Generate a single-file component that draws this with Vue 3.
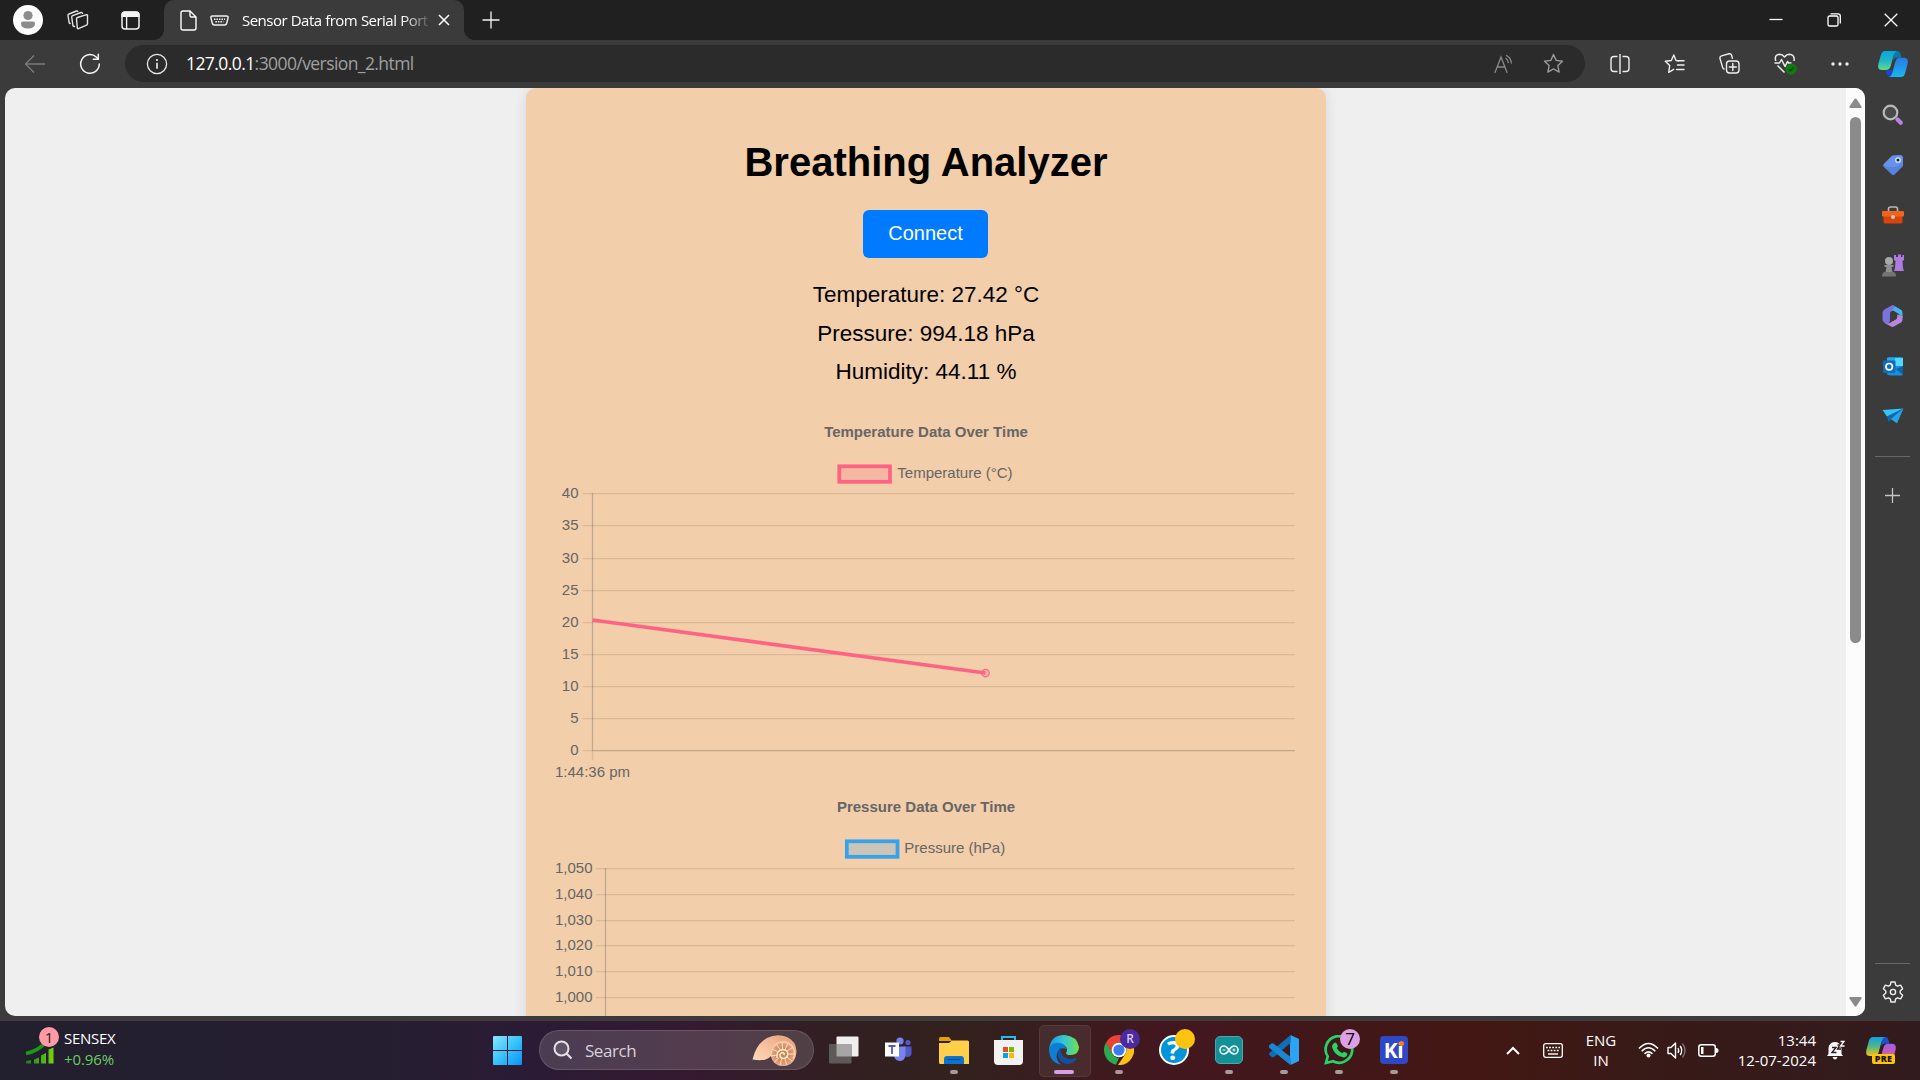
<script setup>
const tempTicks = [81, 113, 146, 178, 210, 242, 274, 306, 338].map((y, i) => ({ label: String(40 - i * 5), y }))
const pressTicks = [81, 107, 133, 158, 184, 210].map((y, i) => ({ label: (1050 - i * 10).toLocaleString('en-US'), y }))
</script>

<template>
  <div class="screen">
    <header class="tabstrip">
      <div class="slot avatar">
        <svg width="30" height="30" viewBox="0 0 30 30"><circle cx="15" cy="15" r="15" fill="#fff" /><circle cx="15" cy="10.5" r="4.6" fill="#8c8c8c" /><path d="M8 18.5q0-2 2-2h10q2 0 2 2 0 5-7 5t-7-5z" fill="#8c8c8c" /></svg>
      </div>
      <div class="slot spaces">
        <svg width="22" height="20" viewBox="0 0 22 20" fill="none" stroke="#e4e4e4" stroke-width="1.4" stroke-linejoin="round" stroke-linecap="round"><path d="M10.5 7.5l9-2.8q1-.2 1 .8v8.3q0 1-1 1.4l-8 3.5q-1 .4-1.200-.8l-.8-9q0-1 1-1.400z" /><path d="M7.500 16.500L6 16l-1.300-9q0-1 1-1.400L14 2.500q1.200-.3 1.500.9" /><path d="M3.200 13.500l-1-.5L1 5.500Q.9 4.400 2 4l7.500-3q1-.2 1.300.5" /></svg>
      </div>
      <div class="slot actions">
        <svg width="19" height="19" viewBox="0 0 19 19"><rect x="1" y="1" width="17" height="17" rx="3" fill="none" stroke="#f4f4f4" stroke-width="1.500" /><path d="M.5 6V4q0-3.500 3.500-3.500h11q3.500 0 3.500 3.500v2z" fill="#f4f4f4" /><path d="M5.600 6v12" stroke="#f4f4f4" stroke-width="1.400" /></svg>
      </div>
      <div class="tab">
        <svg class="file" width="17" height="21" viewBox="0 0 17 21" fill="none" stroke="#fff" stroke-width="1.400" stroke-linejoin="round"><path d="M3 1h7l6 6v11q0 2-2 2H3q-2 0-2-2V3q0-2 2-2z" /><path d="M10 1v4.500q0 1.500 1.500 1.500H16" /></svg>
        <svg class="serial" width="19" height="11" viewBox="0 0 19 11"><path d="M2.500 1h14Q18.500 1 18 3l-1.200 5q-.4 2-2.300 2H4.500q-1.900 0-2.300-2L1 3Q.5 1 2.500 1z" fill="none" stroke="#f0f0f0" stroke-width="1.400" /><path d="M4 4.200h11M5.400 6.800h8" stroke="#f0f0f0" stroke-width="1.500" stroke-dasharray="1.500 1" /></svg>
        <span class="tabtitle">Sensor Data from Serial Port</span>
        <svg width="12" height="12" viewBox="0 0 12 12"><path d="M1 1l10 10M11 1L1 11" stroke="#fff" stroke-width="1.500" /></svg>
      </div>
      <div class="slot newtab"><svg width="18" height="18" viewBox="0 0 18 18"><path d="M9 .5v17M.5 9h17" stroke="#f4f4f4" stroke-width="1.300" /></svg></div>
      <div class="winbtns">
        <div class="slot"><svg width="14" height="14"><path d="M.5 6.500h13" stroke="#fff" stroke-width="1.300" /></svg></div>
        <div class="slot"><svg width="14" height="14" viewBox="0 0 14 14" fill="none" stroke="#fff" stroke-width="1.300"><rect x="1" y="3" width="10" height="10" rx="1.500" /><path d="M3.500.8H11q2.300 0 2.300 2.200v7.500" /></svg></div>
        <div class="slot"><svg width="14" height="14"><path d="M.7.7l12.600 12.600M13.300.7L.7 13.300" stroke="#fff" stroke-width="1.300" /></svg></div>
      </div>
    </header>

    <nav class="toolbar">
      <div class="slot back"><svg width="22" height="20" viewBox="0 0 22 20" fill="none" stroke="#7a7a7a" stroke-width="1.400"><path d="M21 10H1.500M10 1.500L1.500 10l8.500 8.500" /></svg></div>
      <div class="slot reload"><svg width="22" height="22" viewBox="0 0 22 22" fill="none" stroke="#f4f4f4" stroke-width="1.500" stroke-linecap="round"><path d="M20.300 11a9.300 9.300 0 1 1-3.100-7L19 5.800" /><path d="M19.300 1.200v5h-5" /></svg></div>
      <div class="address">
        <svg class="info" width="22" height="22" viewBox="0 0 22 22"><circle cx="11" cy="11" r="9.600" fill="none" stroke="#e8e8e8" stroke-width="1.300" /><circle cx="11" cy="7" r="1" fill="#fff" /><path d="M11 9.800v6" stroke="#fff" stroke-width="1.500" /></svg>
        <div class="url"><b>127.0.0.1</b>:3000/version_2.html</div>
        <svg class="read" width="20" height="20" viewBox="0 0 20 20" fill="none" stroke="#8a8a8a" stroke-width="1.300" stroke-linecap="round"><path d="M1 18.500L7 3l6 15.500M3 13h8" /><path d="M12 4.500q2 1.500 2.200 4M12.500 1.500q4.500 2.500 4.800 7.500" /></svg>
        <svg width="21" height="21" viewBox="0 0 21 21" fill="none" stroke="#9a9a9a" stroke-width="1.400" stroke-linejoin="round"><path d="M10.500 1.500l2.700 5.900 6.300.8-4.600 4.400 1.200 6.500-5.600-3.200-5.600 3.200 1.200-6.500L1.500 8.200l6.300-.8z" /></svg>
      </div>
      <div class="slot tool"><svg width="20" height="20" viewBox="0 0 20 20" fill="none" stroke="#eee" stroke-width="1.400"><path d="M7.500 2.500H4q-3 0-3 3v9q0 3 3 3h3.500M12.500 2.500H16q3 0 3 3v9q0 3-3 3h-3.500M10 0v20" /></svg></div>
      <div class="slot tool"><svg width="21" height="20" viewBox="0 0 21 20" fill="none" stroke="#eee" stroke-width="1.400" stroke-linejoin="round" stroke-linecap="round"><path d="M14.500 6.800L12 6.600 9.800 1 7.300 6.500l-6 .8 4.400 4.200-1 6.800 5-3" /><path d="M14 6.800h6M13.500 11h6.500M12.500 15.500H20" /></svg></div>
      <div class="slot tool"><svg width="21" height="21" viewBox="0 0 21 21" fill="none" stroke="#eee" stroke-width="1.400" stroke-linecap="round"><rect x="7.500" y="8" width="12.500" height="12" rx="3" /><path d="M13.800 10.500v7M10.300 14h7M5 16q-1-.2-1.300-1.400L1 5.600Q.6 3.500 2.500 2.800l7.500-2q2-.4 2.600 1.400l.8 3" /></svg></div>
      <div class="slot tool"><svg width="23" height="22" viewBox="0 0 23 22" fill="none" stroke="#eee" stroke-width="1.500" stroke-linejoin="round"><path d="M1.800 8Q0 1.500 5.500 1.200q3 0 5 2.800 2-2.800 5-2.800 5.500.3 4.500 6.800M3.500 12.500l7 7M.5 10h5l2-3.500 3.500 7 2.500-5 1 1.500h3" /><circle cx="17.300" cy="16" r="5.600" fill="#0f7b0f" stroke="none" /><path d="M14.800 16.200l1.800 1.600 3.200-3.500" stroke="#063e06" stroke-width="1.300" /></svg></div>
      <div class="slot tool"><svg width="18" height="4"><circle cx="2" cy="2" r="1.700" fill="#eee" /><circle cx="9" cy="2" r="1.700" fill="#eee" /><circle cx="16" cy="2" r="1.700" fill="#eee" /></svg></div>
      <div class="slot copilot">
        <svg width="30" height="26" viewBox="0 0 30 26"><defs><linearGradient id="cpa" x1="0" y1="0" x2="0" y2="1"><stop offset="0" stop-color="#0aa5dd" /><stop offset=".5" stop-color="#20b5c8" /><stop offset="1" stop-color="#5fdc8a" /></linearGradient><linearGradient id="cpb" x1="0" y1="0" x2="0" y2="1"><stop offset="0" stop-color="#2b78e0" /><stop offset="1" stop-color="#19b7f2" /></linearGradient></defs><path d="M16 0h3.500q2.200 0 3 3l1 3.800H19q-3 0-4 3z" fill="#0a78a8" /><path d="M8 19h7l-1.300 5q-.6 2-2.200 2-2 0-2.700-3z" fill="#1b45d0" /><path d="M7 0h12q-2.500 1-3.300 4l-3 11q-1 4-5 4H4Q-1 19 .5 12.500L3 3.500Q4 0 7 0z" fill="url(#cpa)" /><path d="M23 26H11q2.500-1 3.300-4l3-11q1-4.200 5-4.200H26q5 0 3.500 6.500L27 22.500Q26 26 23 26z" fill="url(#cpb)" /></svg>
      </div>
    </nav>

    <div class="body">
      <main class="viewport">
        <div class="page">
          <section class="card">
            <h1>Breathing Analyzer</h1>
            <button type="button">Connect</button>
            <p class="r1">Temperature: 27.42 °C</p>
            <p>Pressure: 994.18 hPa</p>
            <p>Humidity: 44.11 %</p>
            <svg class="chart first" width="750" height="375" viewBox="0 0 750 375">
              <text class="title" x="375" y="25" text-anchor="middle">Temperature Data Over Time</text>
              <rect x="288.300" y="54.300" width="50.700" height="15.500" fill="rgba(255,99,132,.2)" stroke="#ff6384" stroke-width="3.750" />
              <text x="346.300" y="66">Temperature (°C)</text>
              <g v-for="t in tempTicks" :key="t.label">
                <path :d="`M31.500 ${t.y}.500H744`" class="grid" />
                <text x="27.500" :y="t.y + 5" text-anchor="end">{{ t.label }}</text>
              </g>
              <path d="M41.500 338.500H744" class="grid" />
              <path d="M41.500 81V338" class="zero" />
              <path d="M41.500 338V348" class="grid" />
              <text x="41.500" y="364.500" text-anchor="middle">1:44:36 pm</text>
              <path d="M41.500 208l393 53" stroke="#ff6384" stroke-width="3.750" />
              <circle cx="434.500" cy="261" r="3.750" fill="rgba(255,99,132,.2)" stroke="#ff6384" stroke-width="1.250" />
            </svg>
            <svg class="chart" width="750" height="222" viewBox="0 0 750 222">
              <text class="title" x="375" y="25" text-anchor="middle">Pressure Data Over Time</text>
              <rect x="295.800" y="54.300" width="50.700" height="15.500" fill="rgba(54,162,235,.2)" stroke="#36a2eb" stroke-width="3.750" />
              <text x="353.300" y="66">Pressure (hPa)</text>
              <g v-for="t in pressTicks" :key="t.label">
                <path :d="`M45 ${t.y}.500H744`" class="grid" />
                <text x="41.500" :y="t.y + 4.700" text-anchor="end">{{ t.label }}</text>
              </g>
              <path d="M54.500 81V240" class="zero" />
            </svg>
          </section>
        </div>
        <div class="scroll">
          <svg width="13" height="11" viewBox="0 0 13 11"><path d="M5.500 1q1-1.200 2 0l5 7.500q.8 1.500-1 1.500h-10Q-.3 10 .5 8.500z" fill="#8b8b8b" /></svg>
          <div class="thumb"></div>
          <svg class="down" width="13" height="11" viewBox="0 0 13 11"><path d="M5.500 10q1 1.200 2 0l5-7.500Q13.300 1 11.500 1h-10Q-.3 1 .5 2.500z" fill="#8b8b8b" /></svg>
        </div>
      </main>
      <aside class="sidebar">
        <div class="side"><svg width="22" height="22" viewBox="0 0 22 22"><circle cx="8.500" cy="8.500" r="6.800" fill="#4a4a4a" stroke="#b9b9b9" stroke-width="2.200" /><path d="M15.500 15.500l3.300 3.300" stroke="#b982e8" stroke-width="4.200" stroke-linecap="round" /></svg></div>
        <div class="side"><svg width="22" height="22" viewBox="0 0 22 22"><path d="M11 1.500L18 1q3 0 3 3v7q0 1-.8 1.800l-7.500 7.500q-1.500 1.400-3 0l-8-7.500q-1.200-1.400 0-2.700l7.500-7.600Q10 1.600 11 1.500z" fill="#6692e8" /><path d="M1.300 12q.2.500.8 1.100l7.600 7.200q1.500 1.400 3 0l7.500-7.500L21 8q-7 8-19.700 4z" fill="#4d7bd6" opacity=".6" /><circle cx="16" cy="6" r="2.200" fill="#222" stroke="#dce8ff" stroke-width="1.300" /></svg></div>
        <div class="side"><svg width="22" height="18" viewBox="0 0 22 18"><path d="M6.500 6V3q0-2 2-2h5q2 0 2 2v3" fill="none" stroke="#b8b8b8" stroke-width="1.600" /><rect x="1.500" y="9" width="19" height="8.500" rx="1.500" fill="#d8450b" /><rect x="0" y="5" width="22" height="5.500" rx="1" fill="#f0641e" /><circle cx="11" cy="11" r="2" fill="#c9c9c9" /></svg></div>
        <div class="side"><svg width="22" height="23" viewBox="0 0 22 23"><path d="M12 1h2v2h2V.500h3V3h1.500V1H22v5l-1.500 1 .5 7 1 3H12l1-3 .5-7L12 6z" fill="#ae7be0" /><circle cx="7" cy="7" r="4" fill="#a8a8a8" /><path d="M2.500 11h9v2h-2l1 5h-7l1-5h-2z" fill="#8f8f8f" /><path d="M0 22.500q0-4.500 3-4.500h8q3 0 3 4.500z" fill="#747474" /></svg></div>
        <div class="side"><svg width="21" height="22" viewBox="0 0 21 22"><path d="M10 .3L2 4.800Q.5 6 .5 8v6.500q0 2 2 3.200L5 19q3-1 3-4V8.500q0-1.500 1.300-2.300L15 3 12 .7Q11-.2 10 .3z" fill="#7b72dc" /><path d="M12 .7l7 4q1.500 1 1.500 3v6q-.5-3-4-5L12 6q-1.800-1-3 .3Q10 4 13 2.500z" fill="#45b5ee" /><path d="M20.500 11v3.500q0 2-1.500 3l-7 4q-1.500.8-3 0L2.500 18q4 1 6-.6l5.500-3.200q2-1.300 1-4.700 5 1 5.500 1.500z" fill="#b787dd" /><path d="M10.500 7.500l4.300 2.300v4L10.500 16 8 14.300V9z" fill="#3b3b3b" /></svg></div>
        <div class="side"><svg width="20" height="19" viewBox="0 0 20 19"><rect x="4" width="16" height="18" rx="1.500" fill="#1591df" /><path d="M4 1h16v8H4z" fill="#50d9ff" /><path d="M4 1h8v8H4z" fill="#28a8ea" /><path d="M20 9v8q0 1.500-1.500 1.500H6L20 9z" fill="#1490df" /><path d="M20 18L13 12l7-3z" fill="#0e63a8" /><rect y="3.500" width="12.500" height="12.500" rx="1.200" fill="#0f6cbd" /><circle cx="6.200" cy="9.700" r="3.200" fill="none" stroke="#fff" stroke-width="1.700" /></svg></div>
        <div class="side"><svg width="22" height="16" viewBox="0 0 22 16"><path d="M.5 2L21.500.5 5 8.500z" fill="#36c3f5" /><path d="M5 8.500L21.500.5 15 15.300z" fill="#27a5e8" /><path d="M5 8.500L21.500.5 9.500 10.500 6.500 14z" fill="#0b6ab3" /></svg></div>
        <div class="rule"></div>
        <svg class="plus" width="15" height="15" viewBox="0 0 15 15"><path d="M7.500 0v15M0 7.500h15" stroke="#c4c4c4" stroke-width="1.300" /></svg>
        <div class="rule low"></div>
        <svg class="gear" width="22" height="22" viewBox="0 0 22 22" fill="none" stroke="#eee" stroke-width="1.400" stroke-linejoin="round"><path d="M9 1h4l.7 3.200 1.800 1 3.100-1 2 3.500-2.400 2.200v2.200l2.400 2.200-2 3.500-3.100-1-1.800 1L13 21H9l-.7-3.200-1.800-1-3.100 1-2-3.500 2.400-2.200V9.900L1.400 7.700l2-3.500 3.100 1 1.800-1z" /><circle cx="11" cy="11" r="2.600" /></svg>
      </aside>
    </div>

    <footer class="taskbar">
      <div class="widget">
        <div class="stock">
          <svg width="30" height="38" viewBox="0 0 30 38"><defs><linearGradient id="stk"><stop offset="0" stop-color="#15801c" /><stop offset="1" stop-color="#75d310" /></linearGradient></defs><path d="M1 26.500Q13 24 20 16" fill="none" stroke="#1f9718" stroke-width="3.600" /><path d="M1 36.500v-2.500l5-1v3.500zM9 36.500v-4l5-2v6zM16 36.500v-8l5-2.500v10.500zM23.500 36.500v-14l5-2v16z" fill="url(#stk)" /></svg>
          <span class="badge">1</span>
        </div>
        <div class="quote"><span>SENSEX</span><span class="up">+0.96%</span></div>
      </div>
      <div class="apps">
        <div class="app"><svg width="29" height="29" viewBox="0 0 29 29"><defs><linearGradient id="win" x1="0" y1="0" x2="1" y2="1"><stop offset="0" stop-color="#8be4ff" /><stop offset=".5" stop-color="#39c3fa" /><stop offset="1" stop-color="#0a90fb" /></linearGradient></defs><path d="M1 0h13v14H0V1q0-1 1-1zM15 0h13q1 0 1 1v13H15zM0 15h14v14H1q-1 0-1-1zM15 15h14v13q0 1-1 1H15z" fill="url(#win)" /></svg></div>
        <div class="search">
          <svg width="20" height="20" viewBox="0 0 20 20" fill="none" stroke="#e5dfe6"><circle cx="8.500" cy="8.500" r="7" stroke-width="2" fill="rgba(255,255,255,.12)" /><path d="M13.500 13.500l5 5" stroke-width="2.200" /></svg>
          <span>Search</span>
          <svg class="shell" width="45" height="31" viewBox="0 0 45 31">
            <defs>
              <linearGradient id="sh" x1="0" y1="1" x2="1" y2="0"><stop offset="0" stop-color="#fde0bf" /><stop offset=".45" stop-color="#f9c39d" /><stop offset="1" stop-color="#e39a78" /></linearGradient>
              <radialGradient id="sp"><stop offset="0" stop-color="#b5651d" /><stop offset=".6" stop-color="#d98d66" /><stop offset="1" stop-color="#e8a888" /></radialGradient>
            </defs>
            <path d="M.5 24.500Q4 9 15 3 25-2 35 2q9 4 9.500 14-.5 14-13.500 15-10-.5-12-10-5 6-18.500 3.500z" fill="url(#sh)" />
            <circle cx="31" cy="19" r="12" fill="url(#sp)" />
            <path d="M31 19l-11-5M31 19l-7-10.500M31 19l-1-12M31 19l5-11M31 19l10-7M31 19l12 0M31 19l9 7M31 19l4 11M31 19l-3 11M31 19l-8.500 8M31 19l-12 2" stroke="#fde3c0" stroke-width="1" />
            <path d="M19 21q0-9 7-13 8-3 14 3 5 7 1 13" fill="none" stroke="#fbd0ac" stroke-width="1.300" />
            <circle cx="31" cy="19.500" r="4.800" fill="#cf8350" />
            <path d="M25 23q-1-8 6-8.500 5 .5 4.800 5-.8 4-4.800 4-3.300-.8-3-3.800.8-2.500 3.300-2 1.500 1 .7 2.500" fill="none" stroke="#fff0d2" stroke-width="1.500" />
          </svg>
        </div>
        <div class="app"><svg width="30" height="28" viewBox="0 0 30 28"><rect x="7.500" y=".500" width="22" height="20" rx="1" fill="#efefef" /><rect y="8" width="22.500" height="19.500" rx="1" fill="#5f5a5a" /><path d="M7.500 8h15v12.500h-15z" fill="#a7a5a5" /></svg></div>
        <div class="app teams"><svg width="27" height="25" viewBox="0 0 27 25"><circle cx="15" cy="4" r="3.600" fill="#7b83eb" /><circle cx="23" cy="5.500" r="2.600" fill="#5059c9" /><path d="M19 9.500h7.500V16q0 4-4 4-3.500 0-3.500-4z" fill="#5059c9" /><path d="M9 9.500h11.500v9q-1 5.500-6 5.500-4.500-.5-5.500-5z" fill="#7b83eb" /><rect y="5.500" width="14" height="14" fill="#fff" /><path d="M3.500 9h7M7 9v8" stroke="#5059c9" stroke-width="1.800" /></svg></div>
        <div class="app"><svg width="30" height="27" viewBox="0 0 30 27"><path d="M1.500 0h8.500l3 4H0V1.500Q0 0 1.500 0z" fill="#e2a100" /><path d="M0 6h10l3-2.500h15.500q1.500 0 1.500 1.500v22H1.500Q0 27 0 25.500z" fill="#ffcf4b" /><path d="M5 27v-5q0-3 3-3h14q3 0 3 3v5z" fill="#0c73cf" /><path d="M8.500 22.500h13" stroke="#07509c" stroke-width="1.300" /></svg><i></i></div>
        <div class="app"><svg width="29" height="29" viewBox="0 0 29 29"><path d="M8 5V1h13v4" fill="none" stroke="#22bdf0" stroke-width="2" /><path d="M0 4h29v21q0 4-4 4H4q-4 0-4-4z" fill="#f2f2f2" /><path d="M9 11h5v5H9z" fill="#f04b20" /><path d="M15 11h5v5h-5z" fill="#7aba02" /><path d="M9 17h5v5H9z" fill="#01a2ee" /><path d="M15 17h5v5h-5z" fill="#fdb801" /></svg></div>
        <div class="app active"><svg width="30" height="30" viewBox="0 0 30 30"><defs><linearGradient id="ea"><stop offset="0" stop-color="#1899e0" /><stop offset=".5" stop-color="#34c7d4" /><stop offset="1" stop-color="#72e04a" /></linearGradient></defs><path d="M0 15Q1 0 15.500 0 28 1 30 12q0 7-7.500 8-5 .5-5.500-2 2-3 0-6-3-4-9-2.500Q2 11 0 15z" fill="url(#ea)" /><path d="M0 15.500Q1 8 9 7.800q7 .2 8 6.200-5-2-8 2-4 8 3 13.500Q1 28 0 15.500z" fill="#0c7fd5" /><path d="M12 12.500q-5 4-2.500 10 2.500 6 9 6.500 6-.5 9.500-5.500 0-1-1-.5-8 3-13-2-3-4-2-8.500z" fill="#11529f" /></svg><i></i></div>
        <div class="app"><svg width="30" height="30" viewBox="0 0 30 30"><path d="M2 7.500A15 15 0 0 1 28 7.500H15L8.500 19z" fill="#ea4335" /><path d="M2 7.500L8.500 18.700Q11 23 15 23l-3 6.700A15 15 0 0 1 2 7.500z" fill="#2da94f" /><path d="M28 7.500A15 15 0 0 1 14 30l7.500-11.300Q24 14 20 8.500L15 7.500z" fill="#fbc116" /><circle cx="15" cy="15" r="7.300" fill="#fff" /><circle cx="15" cy="15" r="5.600" fill="#3a7cec" /></svg><b class="mark prof">R</b><i></i></div>
        <div class="app"><div class="help">?</div><b class="mark amber"></b></div>
        <div class="app"><svg width="28" height="28" viewBox="0 0 28 28"><rect x=".5" y=".5" width="27" height="27" rx="4.500" fill="#149097" stroke="#45a9ae" /><path d="M14 14q-2.500-4-5-4a4 4 0 0 0 0 8q2.500 0 5-4 2.500-4 5-4a4 4 0 0 1 0 8q-2.500 0-5-4z" fill="none" stroke="#e8f5f4" stroke-width="1.600" /><path d="M7.500 14h3M17.500 14h3M19 12.500v3" stroke="#e8f5f4" /></svg><i></i></div>
        <div class="app"><svg width="30" height="30" viewBox="0 0 30 30"><path d="M21.500 0L30 4v22l-8.500 4-.5-8V8z" fill="#2ba5f3" /><path d="M21.500 30L3.500 12.500 1 10.500q-1.500 1-.5 2.500l21 17 .5-8z" fill="#1583cf" /><path d="M3 22l-2.500-2q-1-1 0-2L21.500 0v8L5 22q-1 .6-2 0z" fill="#0c70b8" /><path d="M.5 12.500Q-.5 11 .5 10L2.500 8.500q1-.6 2 0L21.500 22v8z" fill="#1b87d0" /></svg><i></i></div>
        <div class="app"><svg width="30" height="30" viewBox="0 0 30 30"><path d="M2 28l1.700-6.500A13.300 13.300 0 1 1 9 26.300z" fill="none" stroke="#25d366" stroke-width="2.700" /><path d="M10 8q2-1.500 3 1l.8 2q0 1-1 2 2 4 5.500 5.300l1.500-1.500q1 0 3.500 1.700.4 3-3.500 4Q10.500 21 8 12q0-2.500 2-4z" fill="#25d366" /></svg><b class="mark seven">7</b><i></i></div>
        <div class="app"><div class="kicad">Ki</div><i></i></div>
      </div>
      <div class="tray">
        <div class="t chev"><svg width="14" height="9"><path d="M1 8l6-6 6 6" fill="none" stroke="#fff" stroke-width="2" /></svg></div>
        <div class="t kb"><svg width="20" height="15" viewBox="0 0 20 15"><rect x=".7" y=".7" width="18.600" height="13.600" rx="2" fill="none" stroke="#fff" stroke-width="1.300" /><path d="M3 4.500h14M4.500 7.500h12" stroke="#fff" stroke-width="1.700" stroke-dasharray="1.800 1.300" /><path d="M5 11h10" stroke="#fff" stroke-width="1.400" /></svg></div>
        <div class="lang"><span>ENG</span><span>IN</span></div>
        <div class="t wifi"><svg width="21" height="16" viewBox="0 0 21 16" fill="none" stroke="#fff" stroke-width="1.600"><path d="M1 6.500q9.500-10 19 0M3.700 9.200q6.800-7 13.600 0M6.500 11.800q4-4 8 0" /><circle cx="10.500" cy="13.500" r="2" fill="#fff" stroke="none" /></svg></div>
        <div class="t vol"><svg width="20" height="17" viewBox="0 0 20 17" fill="none" stroke="#fff" stroke-width="1.400" stroke-linejoin="round"><path d="M1 5.500h3L8.500 1v15L4 11.500H1z" /><path d="M11 6q1.500 2.500 0 5M13.200 4q3 4.500 0 9" /><path d="M15.500 1.500q5 7 0 14" stroke="#836f6e" /></svg></div>
        <div class="t bat"><svg width="21" height="13" viewBox="0 0 21 13"><rect x=".8" y=".8" width="16.500" height="11.400" rx="2.500" fill="none" stroke="#fff" stroke-width="1.500" /><rect x="3" y="3" width="2.500" height="7" fill="#fff" /><path d="M18 4q2.500 0 2.500 2.500T18 9z" fill="#fff" /></svg></div>
        <div class="clock"><span>13:44</span><span>12-07-2024</span></div>
        <div class="t bell"><svg width="20" height="20" viewBox="0 0 20 20"><path d="M1.500 14V8.500q0-6 6.500-6.500 6 .5 6.500 6.500V14l1.500 2H0zM5.500 17h5q-1 2.500-2.500 2.500T5.500 17z" fill="#fff" /><path d="M5 7.500h4l-4 5h4.500" fill="none" stroke="#301a1a" stroke-width="1.400" /><path d="M13.500 1.500h3.500L13.500 6h4" fill="none" stroke="#301a1a" stroke-width="3" /><path d="M10.500 5h3L10.500 9h3.500" fill="none" stroke="#301a1a" stroke-width="1.300" /><path d="M13.500 1.500h3.500L13.500 6h4" fill="none" stroke="#fff" stroke-width="1.300" /></svg></div>
        <div class="t pre">
          <svg width="30" height="26" viewBox="0 0 30 26"><defs><linearGradient id="pa" x1="0" y1="0" x2="0" y2="1"><stop offset="0" stop-color="#139ced" /><stop offset=".5" stop-color="#52b883" /><stop offset="1" stop-color="#f2c319" /></linearGradient><linearGradient id="pb" x1="0" y1="0" x2="0" y2="1"><stop offset="0" stop-color="#a05be6" /><stop offset="1" stop-color="#f0637c" /></linearGradient></defs><path d="M16 0h3.500q2.200 0 3 3l1 3.800H19q-3 0-4 3z" fill="#1b50c8" /><path d="M7 0h12q-2.500 1-3.300 4l-3 11q-1 4-5 4H4Q-1 19 .5 12.500L3 3.500Q4 0 7 0z" fill="url(#pa)" /><path d="M23 26H11q2.500-1 3.300-4l3-11q1-4.200 5-4.200H26q5 0 3.500 6.500L27 22.500Q26 26 23 26z" fill="url(#pb)" /></svg>
          <b>PRE</b>
        </div>
      </div>
    </footer>
  </div>
</template>

<style>
body { margin: 0; overflow: hidden; background: #3b3b3b; }
</style>

<style scoped>
* { box-sizing: border-box; }
svg { display: block; flex: none; }
.screen { width: 1920px; height: 1080px; display: flex; flex-direction: column; overflow: hidden; font-family: "Open Sans", "Noto Sans", sans-serif; color: #fff; background: #3b3b3b; }
.slot { display: flex; align-items: center; justify-content: center; flex: none; }
.tabstrip { height: 40px; flex: none; display: flex; background: #202020; }
.avatar { width: 56px; }
.spaces { width: 43px; }
.actions { width: 62px; margin-right: 3px; }
.tab { width: 300px; height: 40px; position: relative; display: flex; align-items: center; background: #3b3b3b; border-radius: 10px 10px 0 0; padding-left: 16px; }
.tab::before, .tab::after { content: ""; position: absolute; bottom: 0; width: 10px; height: 10px; }
.tab::before { left: -10px; background: radial-gradient(circle at 0 0, transparent 9.500px, #3b3b3b 10px); }
.tab::after { right: -10px; background: radial-gradient(circle at 100% 0, transparent 9.500px, #3b3b3b 10px); }
.serial { margin-left: 13px; }
.tabtitle { width: 187px; margin: 0 9px 1px 13px; font-size: 15px; letter-spacing: -.52px; word-spacing: .3px; white-space: nowrap; overflow: hidden; -webkit-mask-image: linear-gradient(90deg, #000 86%, transparent 102%); mask-image: linear-gradient(90deg, #000 86%, transparent 102%); }
.newtab { width: 53px; }
.winbtns { display: flex; margin-left: auto; }
.winbtns .slot { width: 57.500px; height: 39px; }
.toolbar { height: 48px; flex: none; display: flex; align-items: center; background: #3b3b3b; }
.back { width: 70px; }
.reload { width: 40px; }
.address { width: 1460px; height: 37px; margin: 0 7px 1px 15px; padding: 0 21px 0 21px; border-radius: 19px; background: #2b2b2b; display: flex; align-items: center; }
.url { margin: 0 auto 1px 18px; color: #a0a0a0; font-size: 17.500px; letter-spacing: -.58px; }
.url b { font-weight: 400; color: #fff; }
.read { margin-right: 29px; }
.tool { width: 55.200px; padding-bottom: 1px; }
.copilot { width: 51px; }
.body { height: 932px; flex: none; display: flex; }
.viewport { width: 1860px; height: 927.500px; margin-left: 5px; display: flex; background: #efefef; border-radius: 10px; overflow: hidden; }
.page { width: 1841px; height: 928px; overflow: hidden; }
.card { width: 800px; height: 1200px; margin-left: 521px; display: flex; flex-direction: column; align-items: center; background: #f2ceaa; border-radius: 10px; box-shadow: 0 0 12.500px rgba(0,0,0,.1); font-family: "Liberation Sans", Arial, sans-serif; color: #000; }
h1 { margin: 51px 0 25px; font-size: 40px; line-height: 46px; font-weight: 700; white-space: nowrap; }
button { width: 125px; height: 48px; margin-right: 1px; border: 0; border-radius: 6px; padding: 0 0 2px; background: #007bff; color: #fff; font: 20px "Liberation Sans", Arial, sans-serif; }
p { margin: 0; height: 38.500px; line-height: 38.500px; font-size: 22.500px; white-space: nowrap; }
.r1 { margin-top: 18px; }
.chart { flex: none; overflow: visible; font-family: "Liberation Sans", Arial, sans-serif; font-size: 15px; }
.chart text { fill: #666; }
.chart .title { font-weight: 700; }
.first { margin-top: 20.500px; }
.grid { stroke: rgba(0,0,0,.1); stroke-width: 1.250px; }
.zero { stroke: rgba(0,0,0,.19); stroke-width: 1.250px; }
.scroll { width: 19px; display: flex; flex-direction: column; align-items: center; background: #fcfcfc; padding: 10px 0 9px; }
.thumb { width: 11px; height: 526px; margin-top: 8px; border-radius: 6px; background: #8b8b8b; }
.down { margin-top: auto; }
.sidebar { width: 55px; display: flex; flex-direction: column; align-items: center; padding: 2px 0 0; }
.side { height: 50.200px; display: flex; align-items: center; }
.rule { width: 35px; height: 1px; background: #676767; margin-top: 15px; }
.plus { margin: 31px 1px 0 0; }
.low { margin-top: auto; }
.gear { margin: 17px 0 17px; }
.taskbar { height: 60px; flex: none; display: flex; border-top: 1px solid #45393f; background: linear-gradient(90deg, #221f2e 0, #251e31 380px, #2b1b35 530px, #351a30 690px, #321f22 830px, #33211e 970px, #43171f 1160px, #42171a 1300px, #431713 1470px, #381a17 1640px, #321b1e 1920px); }
.widget { width: 480px; display: flex; padding-left: 25px; }
.stock { width: 30px; height: 38px; margin-top: 6px; position: relative; }
.badge { position: absolute; left: 14px; top: 0; width: 20px; height: 20px; border-radius: 50%; background: #ff99a4; color: #222; font-size: 15px; line-height: 20px; text-align: center; }
.quote { display: flex; flex-direction: column; margin: 7px 0 0 9px; font-size: 15px; line-height: 21px; letter-spacing: -.3px; }
.up { color: #6ccb5f; letter-spacing: -.1px; }
.apps { display: flex; height: 58px; }
.app { width: 55px; height: 58px; position: relative; display: flex; align-items: center; justify-content: center; flex: none; }
.app > svg, .help, .kicad { position: relative; z-index: 1; }
.teams svg { position: relative; top: -1px; }
.app i { position: absolute; bottom: 5px; left: 23.500px; width: 8px; height: 4px; border-radius: 2px; background: #a49a9a; z-index: 2; }
.app.active i { left: 17.500px; width: 20px; background: #d99ee5; }
.active::before { content: ""; position: absolute; left: 2.500px; top: 4px; width: 50px; height: 50px; border-radius: 5px; background: rgba(255,255,255,.07); border: 1px solid rgba(255,255,255,.07); }
.mark { position: absolute; z-index: 3; left: 29px; top: 8px; width: 20px; height: 20px; border-radius: 50%; text-align: center; font-size: 12px; line-height: 20px; }
.prof { background: #4a2a9c; color: #d9c9f5; font-weight: 600; }
.amber { background: #ffc20e; }
.seven { background: #dda0e4; color: #000; font-weight: 400; font-size: 17px; }
.help { width: 30px; height: 30px; border: 2px solid #fff; border-radius: 50%; background: #0095d8; font-size: 27px; font-weight: 700; line-height: 26px; text-align: center; }
.kicad { width: 28px; height: 28px; border-radius: 4px; background: #2e48c8; font: 700 21px/29px "Open Sans", sans-serif; letter-spacing: -.5px; text-align: center; }
.kicad::after { content: ""; position: absolute; right: 4px; top: 4.500px; width: 5px; height: 5px; border-radius: 50%; background: #ff7a1a; }
.search { width: 275px; height: 40px; margin: 9px 2px 0 4px; padding: 0 16px 0 13px; border-radius: 20px; background: rgba(255,255,255,.15); border: 1px solid rgba(255,255,255,.13); display: flex; align-items: center; }
.search span { margin: 0 auto 0 12px; font-size: 17px; letter-spacing: -.45px; color: #d9d2d9; }
.tray { height: 58px; margin-left: auto; display: flex; align-items: center; padding-right: 25px; font-size: 15px; line-height: 20px; letter-spacing: -.4px; }
.t { display: flex; align-items: center; justify-content: center; flex: none; }
.chev { width: 30px; }
.kb { width: 40px; margin-left: 5px; }
.lang { width: 40px; margin-left: 8px; display: flex; flex-direction: column; align-items: center; letter-spacing: 0; }
.wifi { width: 30px; margin-left: 12px; }
.vol { width: 28px; }
.bat { width: 34px; }
.clock { width: 91px; display: flex; flex-direction: column; align-items: flex-end; white-space: nowrap; letter-spacing: 0; }
.bell { width: 20px; margin-left: 11px; }
.pre { width: 29px; margin-left: 19px; position: relative; }
.pre b { position: absolute; left: 6px; top: 17px; width: 23px; height: 10px; border-radius: 2px; background: #ffc40d; color: #1c1400; font-size: 9px; font-weight: 800; line-height: 10px; letter-spacing: .3px; text-align: center; }
</style>
